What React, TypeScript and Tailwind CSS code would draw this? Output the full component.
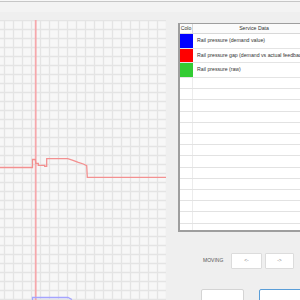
import React from "react";

const GRID_X = Array.from({ length: 19 }, (_, i) => 4.5 + i * 9);
const GRID_Y = Array.from({ length: 32 }, (_, i) => 0.5 + i * 9);

const SERIES = [
  { color: "bg-[#0000ff]", label: "Rail pressure (demand value)" },
  { color: "bg-[#ff0000]", label: "Rail pressure gap (demand vs actual feedback)" },
  { color: "bg-[#33cc33]", label: "Rail pressure (raw)" },
];

function Chart() {
  return (
    <div className="w-[166px] h-[280px] bg-[#f7f7f7] shrink-0 overflow-hidden">
      <svg width="166" height="280" viewBox="0 0 166 280">
        {GRID_X.map((x) => (
          <line key={"x" + x} x1={x} y1={0} x2={x} y2={280} stroke="#e4e4e4" strokeWidth={1.3} />
        ))}
        {GRID_Y.map((y) => (
          <line key={"y" + y} x1={0} y1={y} x2={166} y2={y} stroke="#e4e4e4" strokeWidth={1.3} />
        ))}
        {/* cursor */}
        <rect x={34.8} y={0} width={1.8} height={280} fill="#f6a8ac" />
        {/* rail pressure gap */}
        <path
          d="M0 147.5 H32.5 V139.5 H35.3 L35.8 143.3 H38.3 V145.3 H44.7 V146.3 H46.7 V138.7 H67.7 L70 139.3 L73 140.3 L78.3 142.3 L83.3 144 L86.7 145.7 L87.3 157.3 H166"
          fill="none"
          stroke="#f39090"
          strokeWidth={1.3}
        />
        {/* demand */}
        <path d="M32.5 280 V277.5 H68 L72 279.5" fill="none" stroke="#a4a4ff" strokeWidth={1.3} />
      </svg>
    </div>
  );
}

function ServiceTable() {
  return (
    <div className="mt-[3px] w-[140px] h-[209px] bg-white border-t border-l-2 border-b-2 border-[#9e9e9e] overflow-hidden text-[5.2px] text-[#333]">
      <div className="flex w-[136px] h-[10px] border-b border-[#d8d8d8] bg-[#fbfbfb]">
        <div className="w-[13px] border-r border-[#d8d8d8] flex items-center justify-center overflow-hidden">Colo</div>
        <div className="w-[122px] flex items-center justify-center">Service Data</div>
      </div>
      {SERIES.map((s) => (
        <div key={s.label} className="flex w-[136px] h-[14.7px] border-b border-[#e4e4e4]">
          <div className={`w-[13px] shrink-0 ${s.color}`} />
          <div className="pl-[4px] flex items-center whitespace-nowrap">{s.label}</div>
        </div>
      ))}
      {Array.from({ length: 14 }, (_, i) => (
        <div key={i} className="flex w-[136px] h-[11.2px] border-b border-[#e2e2e2]">
          <div className="w-[13px] shrink-0 border-r border-[#ececec]" />
        </div>
      ))}
    </div>
  );
}

export default function App() {
  return (
    <div className="w-[300px] h-[300px] overflow-hidden bg-[#efefef] font-['Liberation_Sans',Arial,sans-serif]">
      <div className="h-[1px] bg-[#f7f7f7]" />
      <div className="h-[1px] bg-[#c6c6c6]" />
      <div className="h-[10px] bg-[#f3f3f3]" />
      <div className="h-[8px]" />
      <div className="flex gap-[12px]">
        <Chart />
        <div className="flex flex-col">
          <ServiceTable />
          <div className="flex items-center mt-[21px] h-[16px]">
            <span className="ml-[25px] w-[28px] text-[5px] text-[#555]">MOVING</span>
            <button className="w-[31px] h-[16px] bg-white border border-[#dcdcdc] rounded-[1px] text-[5px] text-[#888]">&lt;-</button>
            <button className="ml-[3px] w-[29px] h-[16px] bg-white border border-[#dcdcdc] rounded-[1px] text-[5px] text-[#888]">-&gt;</button>
          </div>
          <div className="flex mt-[20px]">
            <div className="ml-[23px] w-[43px] h-[20px] bg-white border border-[#d4d4d4] rounded-[2px]" />
            <div className="ml-[15px] w-[50px] h-[20px] bg-white border border-[#5a9ed8] rounded-[2px]" />
          </div>
        </div>
      </div>
    </div>
  );
}
